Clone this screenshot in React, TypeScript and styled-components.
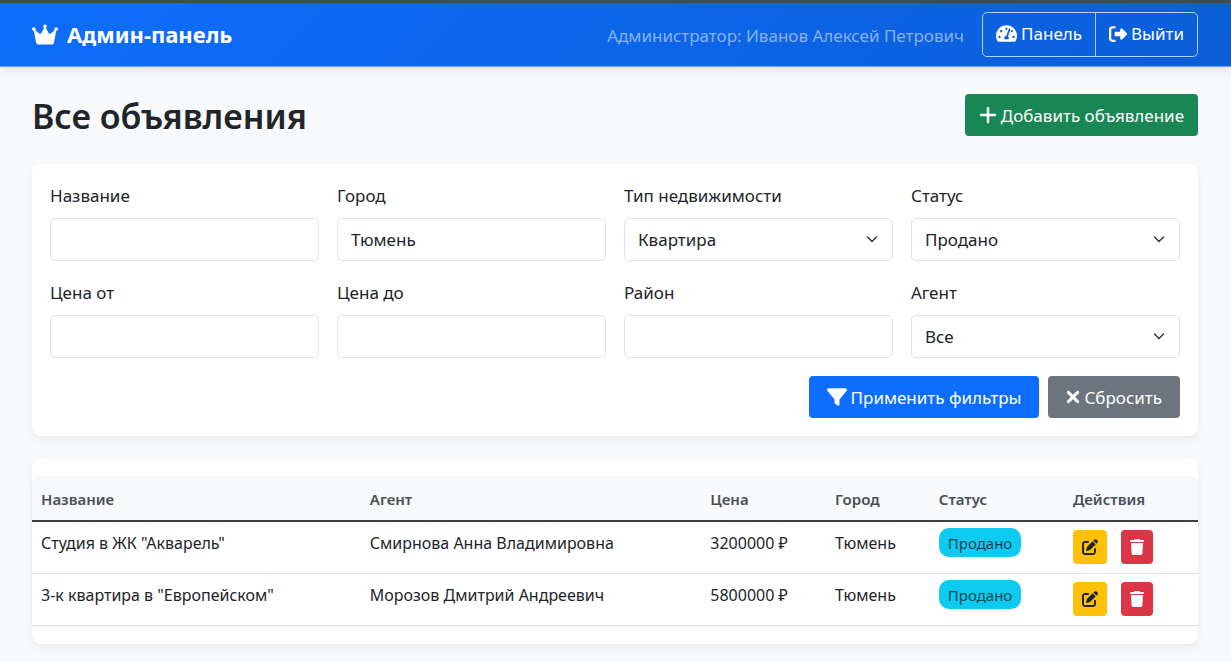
import React from "react";
import styled, { createGlobalStyle } from "styled-components";
import { FaTachometerAlt } from "react-icons/fa";
import {
  FaCrown,
  FaFilter,
  FaPenToSquare,
  FaPlus,
  FaRightFromBracket,
  FaTrash,
  FaXmark,
} from "react-icons/fa6";

const GlobalStyle = createGlobalStyle`
  *, *::before, *::after { box-sizing: border-box; }
  body {
    margin: 0;
    background: #f8f9fb;
    color: #212529;
    font-family: "Segoe UI", "Noto Sans", "Open Sans", sans-serif;
    font-size: 17px;
    line-height: 27px;
  }
  button, input, select { font: inherit; color: inherit; }
`;

const Header = styled.header`
  display: flex;
  align-items: center;
  justify-content: space-between;
  gap: 18px;
  padding: 9px 33px 9px 32px;
  border-top: 3px solid #454951;
  border-bottom: 1px solid #6ea1f3;
  background: linear-gradient(135deg, #0d6efd, #0b5ed7);
  color: #fff;
  box-shadow: 0 2px 9px rgba(0, 0, 0, 0.12);
`;

const Brand = styled.a`
  display: flex;
  align-items: center;
  gap: 9px;
  color: #fff;
  font-size: 22px;
  font-weight: 700;
  text-decoration: none;

  svg { width: 26px; height: 23px; }
`;

const HeaderSide = styled.div`
  display: flex;
  align-items: center;
  gap: 18px;
`;

const UserName = styled.span`
  padding-top: 2px;
  color: rgba(255, 255, 255, 0.5);
`;

const ButtonGroup = styled.nav`
  display: flex;
  border: 1px solid #b5cff7;
  border-radius: 5px;
`;

const GroupLink = styled.a`
  display: flex;
  align-items: center;
  gap: 4px;
  height: 43px;
  padding: 0 13px 2px;
  color: #fff;
  text-decoration: none;

  & + & { border-left: 1px solid #b5cff7; }
`;

const Main = styled.main`
  display: flex;
  flex-direction: column;
  padding: 27px 33px 18px 32px;
`;

const TitleRow = styled.div`
  display: flex;
  align-items: flex-end;
  justify-content: space-between;
  margin-bottom: 28px;
`;

const Title = styled.h1`
  margin: 0;
  font-size: 34px;
  font-weight: 600;
  line-height: 40px;
`;

const tones = {
  success: { background: "#198754", color: "#fff" },
  primary: { background: "#0d6efd", color: "#fff" },
  secondary: { background: "#6c757d", color: "#fff" },
  warning: { background: "#ffc107", color: "#212529" },
  danger: { background: "#dc3545", color: "#fff" },
};
type Tone = keyof typeof tones;

const Button = styled.button<{ $tone: Tone; $icon: number; $wide?: boolean }>`
  display: inline-flex;
  align-items: center;
  justify-content: center;
  gap: 4px;
  height: 42px;
  padding: 0 ${(p) => (p.$wide ? 18 : 14)}px;
  border: 0;
  border-radius: 4px;
  background: ${(p) => tones[p.$tone].background};
  color: ${(p) => tones[p.$tone].color};
  white-space: nowrap;
  cursor: pointer;

  svg { flex: none; width: ${(p) => p.$icon}px; height: 20px; }
`;

const IconButton = styled(Button)`
  height: 34px;
  padding: 0 9px;
`;

const Card = styled.section`
  border-radius: 9px;
  background: #fff;
  box-shadow: 0 4px 9px rgba(0, 0, 0, 0.06);
`;

const FilterForm = styled.form`
  display: grid;
  grid-template-columns: repeat(4, minmax(0, 1fr));
  gap: 18px;
  padding: 18px;
`;

const Field = styled.div`
  display: flex;
  flex-direction: column;
  gap: 9px;
`;

const Input = styled.input`
  width: 100%;
  height: 43px;
  padding: 0 13px;
  border: 1px solid #dee2e6;
  border-radius: 5px;
  background: #fff;
`;

const SelectBox = styled.div`
  display: grid;
  align-items: center;

  > * { grid-area: 1 / 1; }
  svg { justify-self: end; margin-right: 15px; pointer-events: none; }
`;

const Select = styled.select`
  width: 100%;
  height: 43px;
  padding: 0 36px 0 13px;
  border: 1px solid #dee2e6;
  border-radius: 5px;
  background: #fff;
  appearance: none;
`;

const FormActions = styled.div`
  grid-column: 1 / -1;
  display: flex;
  justify-content: flex-end;
  gap: 9px;
`;

const TableCard = styled(Card)`
  margin-top: 23px;
  padding: 18px 0;
`;

const Table = styled.table`
  width: 100%;
  table-layout: fixed;
  border-collapse: separate;
  border-spacing: 0;
  border-radius: 9px 9px 0 0;
  box-shadow: 0 0 1px rgba(0, 0, 0, 0.3);
  font-size: 16px;
  line-height: 24px;
`;

const HeadCell = styled.th`
  height: 45px;
  padding: 0 9px;
  border-bottom: 2px solid #3c4147;
  background: #f8f9fb;
  color: #495057;
  font-size: 15px;
  font-weight: 600;
  text-align: left;

  &:first-child { border-top-left-radius: 9px; }
  &:last-child { border-top-right-radius: 9px; }
`;

const Cell = styled.td`
  height: 52px;
  padding: 9px;
  border-bottom: 1px solid #dee2e6;
  vertical-align: top;
  white-space: nowrap;
`;

const BadgeCell = styled(Cell)`
  padding: 6px 9px;
`;

const ActionCell = styled(Cell)`
  padding: 8px 9px;
`;

const Badge = styled.span`
  display: inline-block;
  height: 29px;
  padding: 0 9px;
  border-radius: 10px;
  background: #0dcaf0;
  color: #164650;
  font-size: 15px;
  line-height: 30px;
`;

const Actions = styled.div`
  display: flex;
  gap: 14px;
`;

function Chevron() {
  return (
    <svg width="12" height="14" viewBox="0 0 12 14" fill="none" aria-hidden="true">
      <path d="m1.5 4 4.5 4.5L10.5 4" stroke="#343a40" strokeWidth="1.5" strokeLinecap="round" strokeLinejoin="round" />
    </svg>
  );
}

function TextField({ id, label, value }: { id: string; label: string; value?: string }) {
  return (
    <Field>
      <label htmlFor={id}>{label}</label>
      <Input id={id} name={id} type="text" defaultValue={value} />
    </Field>
  );
}

function SelectField({ id, label, options }: { id: string; label: string; options: string[] }) {
  return (
    <Field>
      <label htmlFor={id}>{label}</label>
      <SelectBox>
        <Select id={id} name={id}>
          {options.map((option) => (
            <option key={option}>{option}</option>
          ))}
        </Select>
        <Chevron />
      </SelectBox>
    </Field>
  );
}

const columns = [
  { title: "Название", width: "28.2%" },
  { title: "Агент", width: "29.2%" },
  { title: "Цена", width: "10.7%" },
  { title: "Город", width: "8.9%" },
  { title: "Статус", width: "11.5%" },
  { title: "Действия", width: "11.5%" },
];

const listings = [
  { title: 'Студия в ЖК "Акварель"', agent: "Смирнова Анна Владимировна", price: "3200000 ₽", city: "Тюмень", status: "Продано" },
  { title: '3-к квартира в "Европейском"', agent: "Морозов Дмитрий Андреевич", price: "5800000 ₽", city: "Тюмень", status: "Продано" },
];

export default function App() {
  return (
    <>
      <GlobalStyle />
      <Header>
        <Brand href="#">
          <FaCrown />
          Админ-панель
        </Brand>
        <HeaderSide>
          <UserName>Администратор: Иванов Алексей Петрович</UserName>
          <ButtonGroup>
            <GroupLink href="#panel">
              <FaTachometerAlt size={21} />
              Панель
            </GroupLink>
            <GroupLink href="#logout">
              <FaRightFromBracket size={18} />
              Выйти
            </GroupLink>
          </ButtonGroup>
        </HeaderSide>
      </Header>
      <Main>
        <TitleRow>
          <Title>Все объявления</Title>
          <Button type="button" $tone="success" $icon={18}>
            <FaPlus />
            Добавить объявление
          </Button>
        </TitleRow>
        <Card>
          <FilterForm onSubmit={(e) => e.preventDefault()}>
            <TextField id="title" label="Название" />
            <TextField id="city" label="Город" value="Тюмень" />
            <SelectField id="type" label="Тип недвижимости" options={["Квартира"]} />
            <SelectField id="status" label="Статус" options={["Продано"]} />
            <TextField id="price-from" label="Цена от" />
            <TextField id="price-to" label="Цена до" />
            <TextField id="district" label="Район" />
            <SelectField id="agent" label="Агент" options={["Все"]} />
            <FormActions>
              <Button type="submit" $tone="primary" $icon={20} $wide>
                <FaFilter />
                Применить фильтры
              </Button>
              <Button type="reset" $tone="secondary" $icon={14} $wide>
                <FaXmark strokeWidth={24} />
                Сбросить
              </Button>
            </FormActions>
          </FilterForm>
        </Card>
        <TableCard>
          <Table>
            <colgroup>
              {columns.map((column) => (
                <col key={column.title} width={column.width} />
              ))}
            </colgroup>
            <thead>
              <tr>
                {columns.map((column) => (
                  <HeadCell key={column.title} scope="col">{column.title}</HeadCell>
                ))}
              </tr>
            </thead>
            <tbody>
              {listings.map((item) => (
                <tr key={item.title}>
                  <Cell>{item.title}</Cell>
                  <Cell>{item.agent}</Cell>
                  <Cell>{item.price}</Cell>
                  <Cell>{item.city}</Cell>
                  <BadgeCell>
                    <Badge>{item.status}</Badge>
                  </BadgeCell>
                  <ActionCell>
                    <Actions>
                      <IconButton type="button" $tone="warning" $icon={16} aria-label="Редактировать">
                        <FaPenToSquare />
                      </IconButton>
                      <IconButton type="button" $tone="danger" $icon={14} aria-label="Удалить">
                        <FaTrash />
                      </IconButton>
                    </Actions>
                  </ActionCell>
                </tr>
              ))}
            </tbody>
          </Table>
        </TableCard>
      </Main>
    </>
  );
}
